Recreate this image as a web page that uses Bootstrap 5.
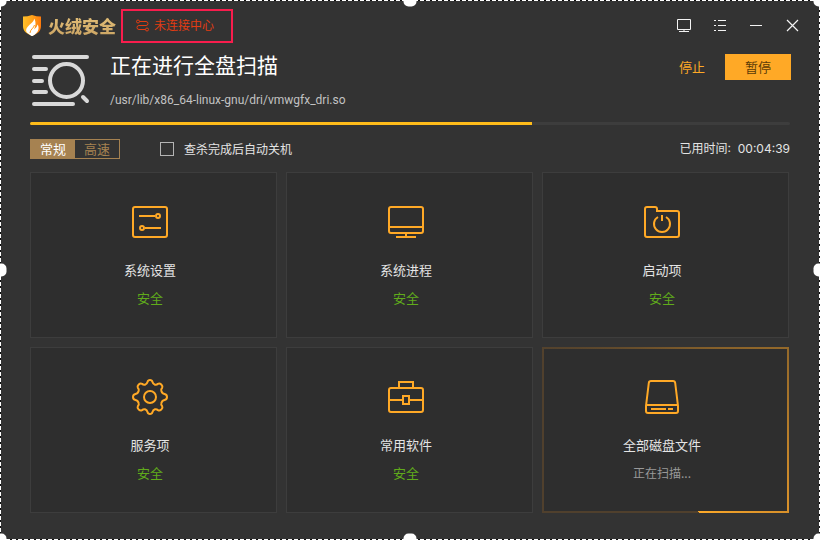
<!DOCTYPE html>
<html lang="zh-CN">
<head>
<meta charset="utf-8">
<meta name="viewport" content="width=device-width, initial-scale=1">
<title>火绒安全</title>
<link href="https://cdn.jsdelivr.net/npm/bootstrap@5.3.0/dist/css/bootstrap.min.css" rel="stylesheet">
<style>
  :root { --amber: #ffa926; --bronze: #a68251; --line: #3d3d3d; }
  body { background: #333; color: #e4e4e4; font: 12px/20px Inter, "Noto Sans CJK SC", sans-serif; }
  .cjk { font-family: "Noto Sans CJK SC", sans-serif; }
  svg { display: block; flex: none; }
  .stroke { fill: none; stroke: currentColor; stroke-width: 2; }

  .title-bar { padding: 8px 10px 0 22px; }
  .brand-name { font-size: 17px; font-weight: 900; line-height: 24px; margin-left: 6px;
    background: linear-gradient(#e6c27a, #c9a262); -webkit-background-clip: text; background-clip: text; color: transparent; }
  .center-link { border: 2px solid #f81d4d; width: 112px; height: 34px; padding: 0 0 2px 13px; margin: 1px 0 0 5px; gap: 5px; color: #e23c12; text-decoration: none; }
  .win-btn { width: 36px; height: 32px; padding: 0; border: 0; color: #f4f4f4; display: flex; align-items: center; justify-content: center; }

  .page { padding: 7px 30px 27px; }
  .scan-icon { margin: 5px 20px 0 2px; color: #d9d9d9; }
  .scan-title { font-size: 21px; line-height: 28px; color: #fff; }
  .scan-path { font-family: Roboto, sans-serif; color: #c2c2c2; margin-top: 12px; }
  .actions { margin-right: -1px; }
  .act { font-size: 13px; line-height: 20px; border: 0; border-radius: 0; height: 26px; padding: 3px 20px; margin-top: 4px; }
  .act-stop { color: var(--amber); }
  .act-pause { background: var(--amber); color: #5b3b08; }

  .scan-progress { height: 3px; margin-top: 12px; border-radius: 2px; background: var(--line); }
  .scan-progress .progress-bar { background: #ffbc1a; }

  .options { margin: 14px 0 13px; }
  .mode { border: 1px solid var(--bronze); height: 20px; }
  .mode label { width: 44px; line-height: 18px; font-size: 13px; text-align: center; color: var(--bronze); cursor: pointer; }
  .mode .btn-check:checked + label { background: var(--bronze); color: #fff; }
  .shutdown { gap: 10px; margin-left: 40px; }
  .shutdown .form-check-input { width: 14px; height: 14px; margin: 0; background-color: transparent; border: 1px solid #b4b4b4; border-radius: 0; }

  .tile-area { padding-right: 1px; }
  .tiles { --bs-gutter-x: 9px; --bs-gutter-y: 9px; }
  .tile { background: #2e2e2e; border: 1px solid var(--line); padding: 31px 15px 29px 8px; text-align: center; font-size: 13px; }
  .tile svg { color: var(--amber); margin: 0 auto 20px; }
  .tile h2 { font-size: 13px; line-height: 20px; font-weight: 400; margin: 0 0 8px; color: #e4e4e4; }
  .safe { color: #60ab1b; }
  .busy { color: #999; font-size: 12px; }
  .tile-active { border-width: 2px; padding: 30px 14px 28px 7px;
    border-image: conic-gradient(from 158deg, #50402d 0deg, #50402d 140deg, #94692a 258deg, #d9912a 326deg, #ffab29 360deg) 2; }

  .frame { position: fixed; inset: 0; pointer-events: none;
    background:
      repeating-linear-gradient(90deg, #fff 0 4px, #111 4px 6px) top / 100% 1px no-repeat,
      repeating-linear-gradient(90deg, #fff 0 4px, #111 4px 6px) bottom / 100% 1px no-repeat,
      repeating-linear-gradient(#fff 0 4px, #111 4px 6px) left / 1px 100% no-repeat,
      repeating-linear-gradient(#fff 0 4px, #111 4px 6px) right / 1px 100% no-repeat; }
  .grip { width: 13px; height: 13px; border-radius: 5px; background: #fff; }
</style>
</head>
<body>
<header class="title-bar d-flex align-items-center">
  <svg width="20" height="24" viewBox="0 0 20 24" aria-hidden="true">
    <defs><linearGradient id="shield" x1="0" x2="1"><stop offset="0" stop-color="#ffc02a"/><stop offset=".5" stop-color="#ffa31a"/><stop offset="1" stop-color="#ff7a0c"/></linearGradient></defs>
    <path fill="url(#shield)" d="M10 1C7 2 4 2.500 1 2.500V12c0 5 3 7.500 9 10 6-2.500 9-5 9-10V2.500C16 2.500 13 2 10 1z"/>
    <path fill="#fff" d="M12 4.500c.5 3-3.500 5-6.500 8.500-1.700 2-1.700 4-.7 5.500L9.500 22h1c3-1.500 5.500-4 6-7 .2-2.500-.2-3.500-1-4.500-.5 2-1.500 3.500-3.500 5 1.500-3 2.500-7.500 0-11z"/>
    <path fill="none" stroke="#ff9a18" d="M12.500 11c-.5 3-4.500 4.500-4.500 8"/>
  </svg>
  <span class="brand-name cjk">火绒安全</span>
  <a href="#" class="center-link cjk d-flex align-items-center">
    <svg width="13" height="13" viewBox="0 0 13 13" fill="none" stroke="currentColor" aria-hidden="true"><circle cx="2" cy="2.500" r="1.500"/><circle cx="11" cy="10.500" r="1.500"/><path d="M3.500 2.500H10a2 2 0 0 1 0 4H3a2 2 0 0 0 0 4h6.500"/></svg>
    <span>未连接中心</span>
  </a>
  <nav class="d-flex ms-auto" aria-label="窗口">
    <button class="btn win-btn" aria-label="屏幕"><svg width="16" height="16" viewBox="0 0 16 16" fill="none" stroke="currentColor"><path d="M1.500 1.500h13v10h-13zM8 11.500v2M3 13.500h10"/></svg></button>
    <button class="btn win-btn" aria-label="菜单"><svg width="16" height="16" viewBox="0 0 16 16" fill="none" stroke="currentColor"><path d="M2 2.500h2M6 2.500h8M2 7.500h2M6 7.500h8M2 12.500h2M6 12.500h8"/></svg></button>
    <button class="btn win-btn" aria-label="最小化"><svg width="16" height="16" viewBox="0 0 16 16" fill="none" stroke="currentColor"><path d="M2 7.500h12"/></svg></button>
    <button class="btn win-btn" aria-label="关闭"><svg width="16" height="16" viewBox="0 0 16 16" fill="none" stroke="currentColor" stroke-width="1.200"><path d="M3 2l11 11M14 2L3 13"/></svg></button>
  </nav>
</header>

<main class="page">
  <section class="d-flex align-items-start">
    <svg class="scan-icon" width="58" height="52" viewBox="0 0 58 52" fill="none" stroke="currentColor" stroke-width="4" stroke-linecap="round" aria-hidden="true">
      <path d="M2 2h53M2 14h12M2 26h8M2 37h12M2 49h39M51 42l4 4"/><circle cx="34.500" cy="25.500" r="16.500"/>
    </svg>
    <div>
      <h1 class="scan-title cjk fw-normal mb-0">正在进行全盘扫描</h1>
      <div class="scan-path">/usr/lib/x86_64-linux-gnu/dri/vmwgfx_dri.so</div>
    </div>
    <div class="actions d-flex ms-auto">
      <button class="btn act act-stop cjk">停止</button>
      <button class="btn act act-pause cjk">暂停</button>
    </div>
  </section>

  <div class="progress scan-progress" role="progressbar" aria-label="扫描进度" aria-valuenow="66" aria-valuemin="0" aria-valuemax="100">
    <div class="progress-bar" style="width: 66%"></div>
  </div>

  <section class="options d-flex align-items-center">
    <div class="mode cjk d-flex" role="group" aria-label="扫描模式">
      <input class="btn-check" type="radio" name="mode" id="mode-normal" checked><label for="mode-normal">常规</label>
      <input class="btn-check" type="radio" name="mode" id="mode-fast"><label for="mode-fast">高速</label>
    </div>
    <div class="shutdown d-flex align-items-center">
      <input class="form-check-input" type="checkbox" id="shutdown"><label class="cjk" for="shutdown">查杀完成后自动关机</label>
    </div>
    <div class="ms-auto">已用时间:&nbsp; 00:04:39</div>
  </section>

  <div class="tile-area">
  <section class="row row-cols-3 tiles mt-0 cjk">
    <div class="col mt-0"><article class="tile">
      <svg class="stroke" width="36" height="36" viewBox="0 0 36 36"><rect x="1" y="3" width="34" height="30" rx="2"/><path d="M7 12h16M13 24h16"/><circle cx="26" cy="12" r="2"/><circle cx="10" cy="24" r="2"/></svg>
      <h2>系统设置</h2><div class="safe">安全</div>
    </article></div>
    <div class="col mt-0"><article class="tile">
      <svg class="stroke" width="36" height="36" viewBox="0 0 36 36"><rect x="1" y="3" width="34" height="26" rx="2"/><path d="M1 23h34M18 29v4M8 33h20"/></svg>
      <h2>系统进程</h2><div class="safe">安全</div>
    </article></div>
    <div class="col mt-0"><article class="tile">
      <svg class="stroke" width="36" height="36" viewBox="0 0 36 36"><path d="M3 3h8q2 0 2 2v2h20q2 0 2 2v22q0 2-2 2H3q-2 0-2-2V5q0-2 2-2zM18 11v6M14 13a8 8 0 1 0 8 0"/></svg>
      <h2>启动项</h2><div class="safe">安全</div>
    </article></div>
    <div class="col"><article class="tile">
      <svg class="stroke" width="36" height="36" viewBox="0 0 36 36" stroke-linejoin="round"><circle cx="18" cy="18" r="6"/><path d="M15.500 3q.5-2 2.500-2t2.500 2q.5 2 2.500 2.700 1.800.3 3-.9 1.500-1 3.300.7 1.700 1.800.9 3.300-1.400 1.500-.9 3 .7 2.700 3.200 3.200 2.500.5 2.500 3t-2.500 3q-2.500.5-3.200 3.200-.5 1.500.9 3 .8 1.500-.9 3.300-1.800 1.700-3.300.7-1.200-1.200-3-.9-2 .7-2.500 2.700-.5 2-2.500 2t-2.500-2q-.5-2-2.500-2.700-1.800-.3-3 .9-1.500 1-3.300-.7-1.700-1.800-.9-3.300 1.400-1.500.9-3Q6 21.500 3.500 21 1 20.500 1 18t2.500-3q2.500-.5 3.200-3.200.5-1.500-.9-3-.8-1.500.9-3.300 1.800-1.700 3.300-.7 1.200 1.200 3 .9 2-.7 2.500-2.700z"/></svg>
      <h2>服务项</h2><div class="safe">安全</div>
    </article></div>
    <div class="col"><article class="tile">
      <svg class="stroke" width="36" height="36" viewBox="0 0 36 36"><rect x="1" y="9" width="34" height="24" rx="2"/><path d="M11 9V3h14v6M1 21h14M21 21h14"/><rect x="15" y="17" width="6" height="8"/></svg>
      <h2>常用软件</h2><div class="safe">安全</div>
    </article></div>
    <div class="col"><article class="tile tile-active">
      <svg class="stroke" width="36" height="36" viewBox="0 0 36 36"><path d="M7 2h22q2 0 2.200 2L34 27v5q0 2-2 2H4q-2 0-2-2v-5L4.800 4Q5 2 7 2zM2.500 26h31M7 30h15M24 30h5"/></svg>
      <h2>全部磁盘文件</h2><div class="busy">正在扫描...</div>
    </article></div>
  </section>
  </div>
</main>

<div class="frame overflow-hidden" aria-hidden="true">
  <span class="grip position-absolute top-0 start-0 translate-middle"></span>
  <span class="grip position-absolute top-0 start-50 translate-middle"></span>
  <span class="grip position-absolute top-0 start-100 translate-middle"></span>
  <span class="grip position-absolute top-50 start-0 translate-middle"></span>
  <span class="grip position-absolute top-50 start-100 translate-middle"></span>
  <span class="grip position-absolute top-100 start-0 translate-middle"></span>
  <span class="grip position-absolute top-100 start-50 translate-middle"></span>
  <span class="grip position-absolute top-100 start-100 translate-middle"></span>
</div>
<script src="https://cdn.jsdelivr.net/npm/bootstrap@5.3.0/dist/js/bootstrap.bundle.min.js"></script>
</body>
</html>
